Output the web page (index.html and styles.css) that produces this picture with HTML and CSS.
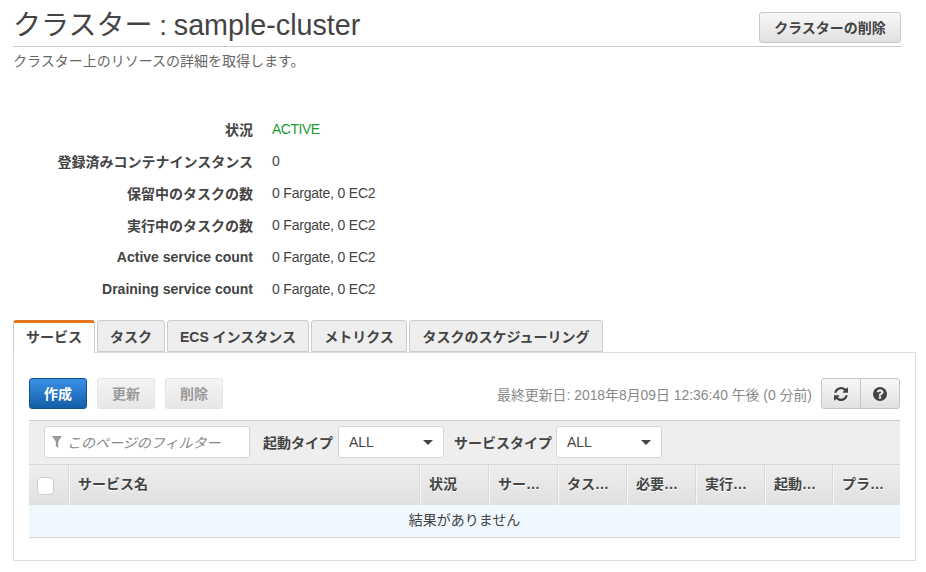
FILE: index.html
```html
<!DOCTYPE html>
<html lang="ja">
<head>
    <meta charset="UTF-8">
    <title>クラスター : sample-cluster</title>
    <link rel="stylesheet" href="styles.css">
</head>
<body>
<div class="page">
    <header class="head">
        <h1>クラスター : <span class="name">sample-cluster</span></h1>
        <button class="btn btn-delete" type="button">クラスターの削除</button>
    </header>
    <p class="sub">クラスター上のリソースの詳細を取得します。</p>

    <dl class="info">
        <div class="info-row"><dt>状況</dt><dd class="active">ACTIVE</dd></div>
        <div class="info-row"><dt>登録済みコンテナインスタンス</dt><dd>0</dd></div>
        <div class="info-row"><dt>保留中のタスクの数</dt><dd>0 Fargate, 0 EC2</dd></div>
        <div class="info-row"><dt>実行中のタスクの数</dt><dd>0 Fargate, 0 EC2</dd></div>
        <div class="info-row"><dt>Active service count</dt><dd>0 Fargate, 0 EC2</dd></div>
        <div class="info-row"><dt>Draining service count</dt><dd>0 Fargate, 0 EC2</dd></div>
    </dl>

    <nav class="tabs">
        <a class="tab tab-on tab-1">サービス</a>
        <a class="tab tab-2">タスク</a>
        <a class="tab tab-3">ECS インスタンス</a>
        <a class="tab tab-4">メトリクス</a>
        <a class="tab tab-5">タスクのスケジューリング</a>
    </nav>

    <section class="panel">
        <div class="actions">
            <button class="btn btn-primary" type="button">作成</button>
            <button class="btn btn-off" type="button">更新</button>
            <button class="btn btn-off" type="button">削除</button>
            <span class="updated">最終更新日: 2018年8月09日 12:36:40 午後 (0 分前)</span>
            <div class="icon-group">
                <button class="icon-btn" type="button" aria-label="更新">
                    <svg width="14" height="14" viewBox="128 128 1536 1536"><path d="M1639 1056q0 5-1 7-64 268-268 434.5t-478 166.5q-146 0-282.5-55t-243.5-157l-129 129q-19 19-45 19t-45-19-19-45v-448q0-26 19-45t45-19h448q26 0 45 19t19 45-19 45l-137 137q71 66 161 102t187 36q134 0 250-65t186-179q11-17 53-117 8-23 30-23h192q13 0 22.5 9.5t9.5 22.5zm25-800v448q0 26-19 45t-45 19h-448q-26 0-45-19t-19-45 19-45l138-138q-148-137-349-137-134 0-250 65t-186 179q-11 17-53 117-8 23-30 23h-199q-13 0-22.5-9.5t-9.5-22.5v-7q65-268 270-434.5t480-166.5q146 0 284 55.5t245 156.5l130-129q19-19 45-19t45 19 19 45z" fill="#444"/></svg>
                </button>
                <button class="icon-btn" type="button" aria-label="ヘルプ">
                    <svg width="14" height="14" viewBox="128 128 1536 1536"><path d="M1024 1376v-192q0-14-9-23t-23-9h-192q-14 0-23 9t-9 23v192q0 14 9 23t23 9h192q14 0 23-9t9-23zm256-672q0-88-55.5-163t-138.5-116-170-41q-243 0-371 213-15 24 8 42l132 100q7 6 19 6 16 0 25-12 53-68 86-92 34-24 86-24 48 0 85.500 26t37.500 59q0 38-20 61t-68 45q-63 28-115.5 86.500t-52.5 125.5v36q0 14 9 23t23 9h192q14 0 23-9t9-23q0-19 21.500-49.500t54.500-49.500q32-18 49-28.500t46-35 44.500-48 28-60.500 12.500-81zm384 192q0 209-103 385.5t-279.5 279.5-385.5 103-385.5-103-279.5-279.5-103-385.5 103-385.5 279.5-279.5 385.5-103 385.5 103 279.5 279.5 103 385.5z" fill="#444"/></svg>
                </button>
            </div>
        </div>

        <div class="filters">
            <div class="filter-box">
                <svg class="funnel" width="10" height="12" viewBox="0 0 10 12"><path d="M0 0h10L6.200 5.500V12L3.800 10V5.500z" fill="#999"/></svg>
                <span class="placeholder">このページのフィルター</span>
            </div>
            <label class="filter-label">起動タイプ</label>
            <div class="select select-first"><span>ALL</span><i class="caret"></i></div>
            <label class="filter-label">サービスタイプ</label>
            <div class="select"><span>ALL</span><i class="caret"></i></div>
        </div>

        <div class="thead">
            <div class="th th-check"><span class="checkbox"></span></div>
            <div class="th">サービス名</div>
            <div class="th">状況</div>
            <div class="th">サー…</div>
            <div class="th">タス…</div>
            <div class="th">必要…</div>
            <div class="th">実行…</div>
            <div class="th">起動…</div>
            <div class="th">プラ…</div>
        </div>
        <div class="empty">結果がありません</div>
    </section>
</div>
</body>
</html>
```
FILE: styles.css
```css
*{
    margin: 0;
    padding: 0;
    box-sizing: border-box;
}
body{
    background: #ffffff;
    color: #444444;
    font-family: "Liberation Sans", "Noto Sans CJK JP", sans-serif;
    font-size: 14px;
}
.page{
    width: 926px;
    height: 572px;
    padding-left: 13px;
    overflow: hidden;
}
.head{
    width: 888px;
    height: 47px;
    border-bottom: 1px solid #cccccc;
    display: flex;
    justify-content: space-between;
    align-items: flex-start;
}
h1{
    font-size: 28px;
    font-weight: 400;
    line-height: 50px;
    word-spacing: -1px;
    color: #444444;
}
.name{
    font-size: 28.7px;
}
.sub{
    font-size: 14px;
    line-height: 18px;
    margin-top: 5px;
    color: #666666;
}
.btn{
    font-family: inherit;
    font-size: 14px;
    font-weight: 700;
    border-radius: 3px;
    border: 1px solid #c6c6c6;
    height: 31px;
    width: 58px;
    padding-bottom: 2px;
    color: #444444;
    background: linear-gradient(#f8f8f8, #e1e1e1);
}
.btn-delete{
    width: 142px;
    margin-top: 12px;
}
.btn-primary{
    color: #ffffff;
    border-color: #15508f;
    background: linear-gradient(#3a90e6, #145ea8);
}
.btn-off{
    color: #999999;
    border-color: #e4e4e4;
    background: linear-gradient(#f4f4f4, #e7e7e7);
}
.info{
    margin-top: 43px;
}
.info-row{
    display: flex;
    height: 32px;
    align-items: center;
    font-size: 14px;
}
.info-row dt{
    width: 240px;
    text-align: right;
    font-weight: 700;
    color: #444444;
}
.info-row dd{
    margin-left: 19px;
    letter-spacing: -0.2px;
}
.info-row .active{
    color: #1d9a33;
    letter-spacing: -0.5px;
}
.tabs{
    display: flex;
    gap: 2px;
    margin-top: 15px;
    height: 33px;
    position: relative;
    z-index: 1;
}
.tab{
    height: 32px;
    border: 1px solid #cccccc;
    border-radius: 3px 3px 0 0;
    background: #eeeeee;
    font-weight: 700;
    color: #444444;
    line-height: 32px;
    text-align: center;
}
.tab-on{
    height: 33px;
    background: #ffffff;
    border-top: 3px solid #e5771e;
    border-bottom: none;
    line-height: 29px;
}
.tab-1{ width: 82px; }
.tab-2{ width: 68px; }
.tab-3{ width: 142px; }
.tab-4{ width: 96px; }
.tab-5{ width: 194px; }
.panel{
    width: 903px;
    height: 209px;
    margin-top: -1px;
    border: 1px solid #dddddd;
    padding: 25px 15px 0 15px;
}
.actions{
    display: flex;
    align-items: center;
    gap: 10px;
    height: 31px;
}
.updated{
    margin-left: auto;
    color: #888888;
    font-size: 13.9px;
    margin-right: -1px;
}
.icon-group{
    display: flex;
    width: 79px;
    height: 31px;
    border: 1px solid #c6c6c6;
    border-radius: 3px;
    background: linear-gradient(#f8f8f8, #e1e1e1);
}
.icon-btn{
    flex: 1;
    border: none;
    background: none;
    display: flex;
    align-items: center;
    justify-content: center;
}
.icon-btn + .icon-btn{
    border-left: 1px solid #c6c6c6;
}
.filters{
    display: flex;
    align-items: center;
    margin-top: 11px;
    height: 44px;
    padding-left: 15px;
    padding-bottom: 1px;
    background: #eeeeee;
    border-top: 1px solid #cccccc;
}
.filter-box{
    width: 206px;
    height: 32px;
    background: #ffffff;
    border: 1px solid #d5d5d5;
    border-radius: 3px;
    display: flex;
    align-items: center;
    padding-left: 7px;
}
.funnel{
    margin-right: 5px;
}
.placeholder{
    color: #888888;
    font-style: italic;
}
.filter-label{
    font-weight: 700;
    margin-left: 13px;
    margin-right: 4px;
    color: #444444;
}
.select{
    width: 106px;
    height: 32px;
    background: #ffffff;
    border: 1px solid #d5d5d5;
    border-radius: 3px;
    display: flex;
    align-items: center;
    justify-content: space-between;
    padding: 0 10px;
}
.select-first{
    margin-left: 1px;
    margin-right: -3px;
}
.caret{
    width: 0;
    height: 0;
    border-left: 5px solid transparent;
    border-right: 5px solid transparent;
    border-top: 5px solid #444444;
}
.thead{
    display: grid;
    grid-template-columns: 40px 351px 69px 69px 69px 69px 69px 68px 67px;
    height: 41px;
    background: linear-gradient(#eeeeee, #e0e0e0);
    border-top: 1px solid #d5d5d5;
}
.th{
    font-weight: 700;
    color: #444444;
    line-height: 39px;
    padding-left: 8px;
    border-left: 1px solid #f6f6f6;
    box-shadow: -1px 0 0 #d8d8d8;
    text-shadow: 0 1px 0 #ffffff;
    white-space: nowrap;
}
.th-check{
    border-left: none;
    box-shadow: none;
    display: flex;
    align-items: center;
}
.checkbox{
    width: 17px;
    height: 18px;
    margin-top: 2px;
    background: #ffffff;
    border: 1px solid #cccccc;
    border-radius: 4px;
}
.empty{
    height: 33px;
    background: #f0f8ff;
    border-bottom: 1px solid #d5d5d5;
    text-align: center;
    line-height: 31px;
    color: #444444;
}
```
